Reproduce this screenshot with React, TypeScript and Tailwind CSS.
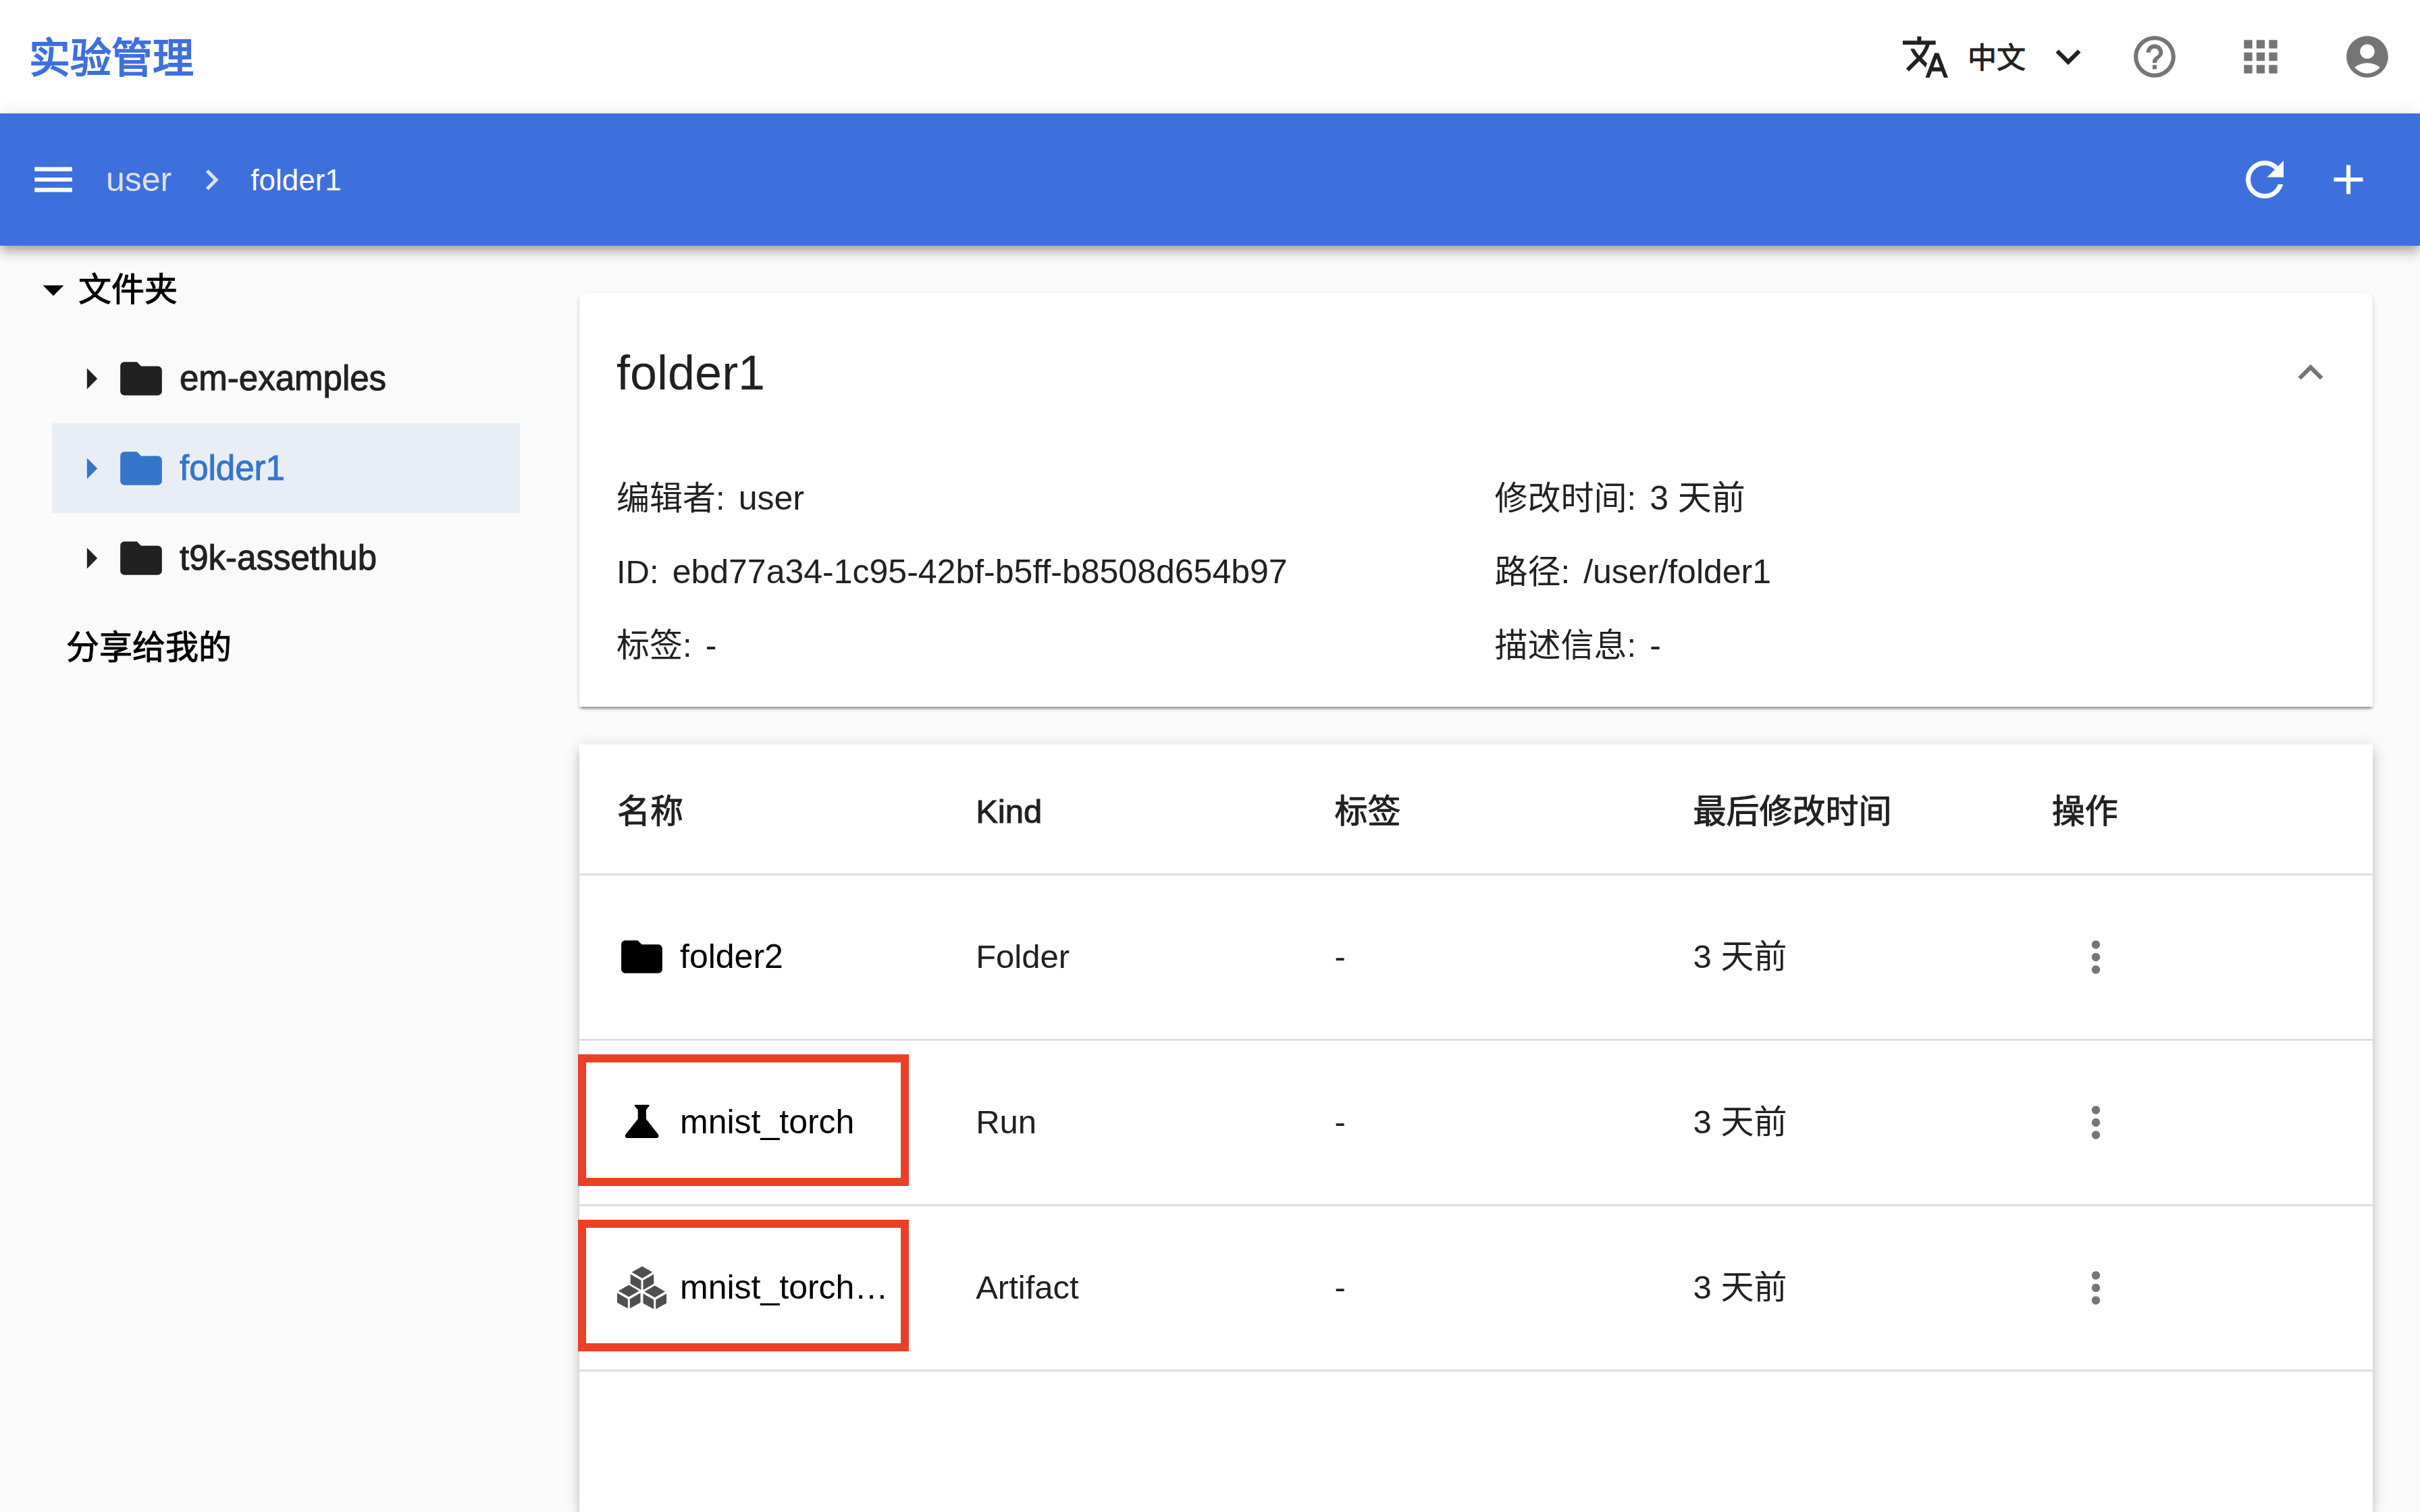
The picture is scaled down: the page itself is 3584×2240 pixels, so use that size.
import React from "react";
import {
  MdMenu, MdChevronRight, MdTranslate, MdKeyboardArrowDown, MdKeyboardArrowUp, MdHelpOutline,
  MdApps, MdAccountCircle, MdRefresh, MdAdd, MdArrowDropDown, MdArrowRight, MdFolder, MdMoreVert,
} from "react-icons/md";

const appBarShadow =
  "shadow-[0_6px_12px_-3px_rgba(0,0,0,0.2),0_12px_15px_0_rgba(0,0,0,0.14),0_3px_31px_0_rgba(0,0,0,0.12)]";
const cardShadow =
  "shadow-[0_6px_3px_-3px_rgba(0,0,0,0.2),0_3px_3px_0_rgba(0,0,0,0.14),0_3px_9px_0_rgba(0,0,0,0.12)]";
const tableShadow =
  "shadow-[0_9px_9px_-6px_rgba(0,0,0,0.2),0_9px_12px_0_rgba(0,0,0,0.14),0_3px_24px_0_rgba(0,0,0,0.12)]";
const medium = "font-normal [-webkit-text-stroke:1px_currentColor]";
const semibold = "font-normal [-webkit-text-stroke:2px_currentColor]";

function FlaskIcon() {
  return (
    <svg viewBox="0 0 24 24" className="size-[73px] shrink-0" fill="currentColor" aria-hidden="true">
      <path d="M8.700 3.500h6.700c.3 0 .4.3.2.600L14.100 6v4.400l5.800 7.400c.7.900.2 1.900-.8 1.900H5c-1 0-1.500-1-.8-1.900L10.100 10.400V6L8.500 4.100c-.2-.3-.1-.6.2-.6z" />
    </svg>
  );
}

function Cube({ x, y }: { x: number; y: number }) {
  return (
    <g transform={`translate(${x} ${y})`}>
      <path d="M17.500 0 33 9 17.500 18 2 9z" />
      <path d="M0 12 16 21.200V35.500L0 26.500z" />
      <path d="M35 12 19 21.200V35.500L35 26.500z" />
    </g>
  );
}

function CubesIcon() {
  return (
    <svg viewBox="0 0 74 74" className="size-[73px] shrink-0 text-[#4f4f4f]" fill="currentColor" aria-hidden="true">
      <Cube x={20} y={5} />
      <Cube x={0} y={33} />
      <Cube x={39} y={34} />
    </svg>
  );
}

function TreeItem({ name, selected }: { name: string; selected?: boolean }) {
  return (
    <li>
      <a
        href="#"
        className={`flex h-[133px] items-center pl-[21px] text-[51px] ${selected ? "bg-[#e9eef6] text-[#3575cb]" : ""}`}
      >
        <MdArrowRight className="size-[74px]" />
        <MdFolder className="size-[74px]" />
        <span className={`ml-[20px] ${medium}`}>{name}</span>
      </a>
    </li>
  );
}

function Field({ label, value }: { label: string; value: string }) {
  return (
    <div className="flex gap-[20px]">
      <dt>{label}:</dt>
      <dd className="text-[50px]">{value}</dd>
    </div>
  );
}

const rows = [
  { name: "folder2", kind: "Folder", icon: <MdFolder className="size-[73px] shrink-0" />, marked: false },
  { name: "mnist_torch", kind: "Run", icon: <FlaskIcon />, marked: true },
  { name: "mnist_torch…", kind: "Artifact", icon: <CubesIcon />, marked: true },
];

export default function App() {
  return (
    <div className="flex h-screen flex-col overflow-hidden bg-[#fafafa] font-['Liberation_Sans','Noto_Sans_CJK_SC',sans-serif] text-[49px] leading-[73px] text-[#212121]">
      <header className="flex h-[168px] shrink-0 items-center justify-between bg-white pr-[41px] pl-[43px]">
        <h1 className={`pt-[6px] text-[61px] text-[#3e70dd] ${semibold}`}>实验管理</h1>
        <div className="flex items-center text-[#757575]">
          <button className="flex items-center text-[43px] text-[#212121]">
            <MdTranslate className="size-[73px]" />
            <span className={`ml-[26px] pt-[4px] ${medium}`}>中文</span>
            <MdKeyboardArrowDown className="ml-[26px] size-[74px]" />
          </button>
          <button aria-label="帮助" className="ml-[54px]"><MdHelpOutline className="size-[74px]" /></button>
          <button aria-label="应用" className="ml-[83px]"><MdApps className="size-[74px]" /></button>
          <button aria-label="账户" className="ml-[84px]"><MdAccountCircle className="size-[74px]" /></button>
        </div>
      </header>

      <nav className={`relative z-10 flex h-[196px] shrink-0 items-center justify-between bg-[#3e70dd] pr-[69px] pl-[42px] text-white ${appBarShadow}`}>
        <div className="flex items-center">
          <button aria-label="菜单"><MdMenu className="size-[74px]" /></button>
          <a href="#" className="ml-[41px] text-[50px] text-[#e0e0e0]">user</a>
          <MdChevronRight className="ml-[29px] size-[61px] text-[#e0e0e0]" />
          <a href="#" className="ml-[27px] text-[44px]">folder1</a>
        </div>
        <div className="flex items-center gap-[45px]">
          <button aria-label="刷新"><MdRefresh className="size-[84px]" /></button>
          <button aria-label="新建"><MdAdd className="size-[74px]" /></button>
        </div>
      </nav>

      <div className="flex min-h-0 flex-1">
        <aside className="w-[858px] shrink-0 pr-[88px]">
          <button className={`flex h-[130px] items-center pl-[42px] text-black ${medium}`}>
            <MdArrowDropDown className="size-[74px]" />
            文件夹
          </button>
          <ul className="pl-[77px]">
            <TreeItem name="em-examples" />
            <TreeItem name="folder1" selected />
            <TreeItem name="t9k-assethub" />
          </ul>
          <a href="#" className={`flex h-[133px] items-center pl-[98px] text-black ${medium}`}>分享给我的</a>
        </aside>

        <main className="flex min-w-0 flex-1 flex-col gap-[56px] pt-[70px] pr-[70px]">
          <section className={`shrink-0 rounded-t-[12px] bg-white pb-[54px] pl-[55px] ${cardShadow}`}>
            <div className="flex h-[236px] items-center justify-between pr-[55px]">
              <h2 className="text-[72px]">folder1</h2>
              <button aria-label="收起"><MdKeyboardArrowUp className="size-[74px] text-[#757575]" /></button>
            </div>
            <dl className="grid grid-cols-2 gap-y-[36px] pt-[32px]">
              <Field label="编辑者" value="user" />
              <Field label="修改时间" value="3 天前" />
              <Field label="ID" value="ebd77a34-1c95-42bf-b5ff-b8508d654b97" />
              <Field label="路径" value="/user/folder1" />
              <Field label="标签" value="-" />
              <Field label="描述信息" value="-" />
            </dl>
          </section>

          <section className={`flex-1 bg-white ${tableShadow}`}>
            <table className="w-full table-fixed text-left">
              <thead>
                <tr className="h-[192px] border-b-[3px] border-[#e0e0e0]">
                  {["名称", "Kind", "标签", "最后修改时间", "操作"].map((h) => (
                    <th key={h} scope="col" className={`pt-[8px] pl-[56px] ${medium}`}>{h}</th>
                  ))}
                </tr>
              </thead>
              <tbody>
                {rows.map((r) => (
                  <tr key={r.kind} className="h-[245px] border-b-[3px] border-[#e0e0e0]">
                    <td className="relative pl-[56px]">
                      <a href="#" className="flex items-center gap-[20px] text-[50px] text-black">
                        {r.icon}
                        <span className="whitespace-nowrap">{r.name}</span>
                      </a>
                      {r.marked && (
                        <span className="pointer-events-none absolute top-[20px] -left-[2px] h-[195px] w-[490px] border-[12px] border-[#ec4026]" />
                      )}
                    </td>
                    <td className="pl-[56px]">{r.kind}</td>
                    <td className="pl-[56px]">-</td>
                    <td className="pl-[56px]">3 天前</td>
                    <td className="pl-[84px]">
                      <button aria-label="更多操作" className="block text-[#757575]"><MdMoreVert className="size-[74px]" /></button>
                    </td>
                  </tr>
                ))}
              </tbody>
            </table>
          </section>
        </main>
      </div>
    </div>
  );
}
